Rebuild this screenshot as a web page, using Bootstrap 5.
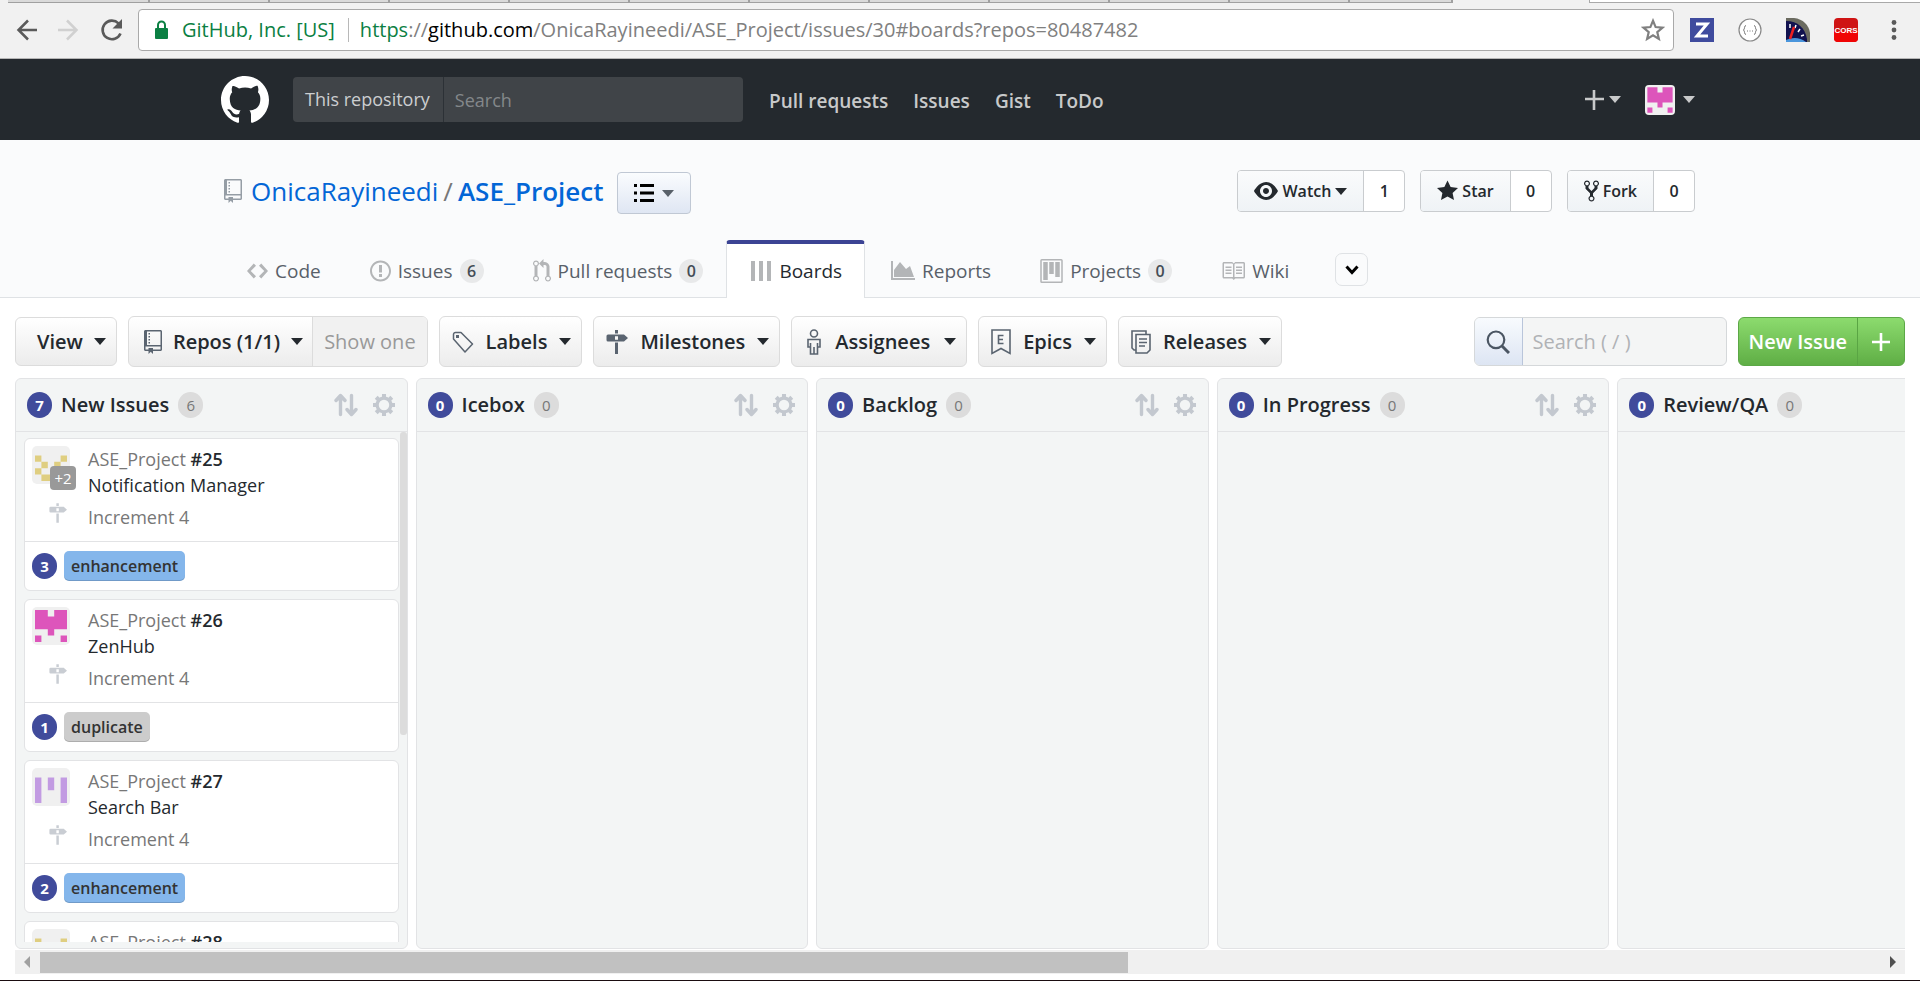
<!DOCTYPE html>
<html lang="en">
<head>
<meta charset="utf-8">
<meta name="viewport" content="width=device-width, initial-scale=1">
<title>ASE_Project boards</title>
<link href="https://cdn.jsdelivr.net/npm/bootstrap@5.3.0/dist/css/bootstrap.min.css" rel="stylesheet">
<style>
:root{--ink:#24292e;--zen:#404b9b;--line:#dfe2e5}
body{font-family:"Open Sans","Noto Sans",sans-serif;color:var(--ink);font-size:18px;line-height:26px;background:#fff}
svg{display:block;flex:none;fill:currentColor}
a{text-decoration:none}
button{font-family:inherit}
.sb{font-weight:600}
.caret{width:0;height:0;border:6px solid transparent;border-top:7px solid currentColor;border-bottom:0;flex:none}
/* browser chrome */
.tabstrip{height:3px;background:#f1f1f1}
.tabstrip i{height:3px;width:120px;background:#dadada;border-bottom:1px solid #a0a0a0;border-left:2px solid #a0a0a0;flex:none}
.tabstrip i:first-child{width:140px;border-left:0}
.tabstrip i.last{width:105px;border-right:2px solid #a0a0a0}
.tabstrip b{border:1px solid #a9a9a9;border-width:0 0 1px 1px;background:#fff;margin-left:136px}
.chrome{background:#f1f1f1;border-bottom:1px solid #b6b6b6;padding:6px 14px 7px 16px;color:#5a5a5a}
.omnibox{height:42px;border:1px solid #a9a9a9;border-radius:4px;background:#fff;font-size:20px;color:#808080;margin-left:14px}
.next{margin-left:20px}
.green{color:#0b8043}
.cut{width:1px;height:24px;background:#b8b8b8;margin:0 11px 0 13px}
/* site header */
.wrap{width:100%;max-width:1474px;margin:0 auto}
.gh,.repohead{padding-right:4px}
.gh{background:var(--ink);height:81px;color:#c8c9ca}
.gh a,.gh button{color:#c8c9ca}
.gh nav{font-size:19px;padding:2px 0 0 26px;gap:25px}
.gh-search{height:45px;width:450px;border-radius:4px;background:#404448;overflow:hidden}
.gh-search label{padding:0 13px 0 12px;border-right:1px solid #2c3136;line-height:45px;color:#ccced0}
.gh-search input{background:none;border:0;color:#ccc;padding:0 11px;min-width:0}
.gh-search input::placeholder{color:#84888b;opacity:1}
.plain{border:0;background:none;padding:0}
/* repository head */
.repohead{background:#fafbfc;border-bottom:1px solid var(--line);height:158px}
.headline{padding-top:30px}
.title{font-size:26px;line-height:32px;padding:0 0 5px 3px}
.title svg{margin-right:9px}
.title span{margin:0 5px}
.title a{color:#0366d6}
.listbtn{width:74px;height:42px;border:1px solid #c0c8d4;border-radius:4px;background:linear-gradient(#fafcfe,#dfe6f3);color:#586069;margin-left:14px}
.social{height:42px;font-size:16px;border:1px solid #c9cccf;border-radius:4px;background:#fff;overflow:hidden;color:var(--ink)}
.social-row{gap:15px;margin-bottom:4px}
.social button{border:0;border-right:1px solid #c9cccf;background:linear-gradient(#fafbfc,#eff3f6);font-weight:600;color:var(--ink);height:40px}
.social a{color:var(--ink);font-weight:600;width:40px}
.tab{height:58px;color:#586069;padding:4px 23px 0 26px;gap:7px;margin-bottom:-1px;font-size:19px}
.tab svg{color:#b3b5b7}
.tab.on{background:#fff;color:var(--ink);border:1px solid var(--line);border-top:4px solid #3c4494;border-bottom:0;border-radius:4px 4px 0 0;padding:0 22px 0 24px;gap:8px}
.num{font-size:16px;line-height:24px;min-width:24px;border-radius:12px;background:#e8e9ea;color:#444d56;font-weight:600;text-align:center}
.more{width:33px;height:33px;border:1px solid var(--line);border-radius:7px;background:#fafbfc;color:#000;margin:13px 0 0 23px}
/* filters */
.filters{padding:18px 15px 11px;height:80px;gap:11px;font-size:20px}
.fbtn{height:51px;border:1px solid #dcdcdc;border-radius:6px;background:linear-gradient(#fff,#ececec);font-weight:600;color:var(--ink);padding:0 10px 0 12px;gap:12px;white-space:nowrap}
.fbtn svg{color:#5a6470}
.fbtn.short{padding-left:21px;gap:11px}
.fbtn.split{padding:0;gap:0}
.fbtn.split .plain{padding:0 9px 0 15px;gap:11px}
.fbtn.loose{padding-left:15px;gap:14px}
.fbtn.short,.find,.new{height:49px}
.showone{font-weight:400;color:#999;background:#f1f1f1;border:0;border-left:1px solid #dcdcdc;border-radius:0 5px 5px 0;padding:0 11px}
.find{width:253px;border:1px solid #d5d8da;border-radius:6px;background:#f4f5f5;overflow:hidden}
.find button{flex:0 0 48px;border:0;border-right:1px solid #b9c5da;background:linear-gradient(#f8fbfe,#dde5f3);color:#4b5663}
.find input{border:0;background:none;min-width:0;padding:0 10px}
.find input::placeholder{color:#b0b2b5;opacity:1}
.new{border:1px solid #5ca846;border-radius:6px;background:linear-gradient(#8cdb6e,#5fae45);overflow:hidden}
.new button{border:0;background:none;color:#fff;font-weight:600;padding:0 10px}
.new button+button{border-left:1px solid #5aa544;width:47px}
/* board */
.board{margin:0 15px;gap:8px;overflow:hidden;min-height:0}
.lane{flex:0 0 20.77%;background:#f3f5f5;border:1px solid #e2e3e5;border-radius:6px;min-height:0;padding-bottom:6px;position:relative}
.lane-head{height:53px;border-bottom:1px solid #e2e3e5;padding:0 12px 0 11px}
.lane-head h2{font-size:20px;line-height:26px;margin:0 9px;font-weight:600}
.lane-head svg{color:#c3c8cf}
.lane-head svg+svg{margin-left:15px}
.pill{height:26px;min-width:25px;line-height:26px;border-radius:13px;background:var(--zen);color:#fff;font-size:15px;font-weight:700;text-align:center}
.pill.grey{background:#dcdcdc;color:#777;font-weight:400}
.cards{overflow:hidden;min-height:0;padding:6px 8px 0;gap:8px}
.issue{border:1px solid #e2e3e5;border-radius:6px;background:#fff;height:153px;flex:none}
.issue-top{height:103px;border-bottom:1px solid #e2e3e5;padding:7px 7px 0;gap:18px}
.issue-tags{height:48px;padding:0 7px;gap:7px}
.due{margin-top:6px}
.face{width:38px;height:38px}
.post{margin:18px 0 0 17px;color:#c9cdd3}
.muted{color:#777}
.plus2{left:18px;top:20px;width:26px;height:24px;border-radius:4px;background:#999;color:#fff;font-size:15px;line-height:24px;text-align:center}
.tag{height:30px;line-height:30px;border-radius:5px;padding:0 7px;background:#84b6eb;color:#333;font-size:16px;font-weight:600;box-shadow:inset 0 -1px 0 rgba(0,0,0,.15)}
.tag.dup{background:#ccc}
.thumb-y{position:absolute;right:0;top:53px;width:7px;height:303px;border-radius:3px;background:#dcdcdc}
.scroll-x{margin:1px 15px 6px;height:24px;background:#f0f0f0;color:#a0a0a0}
.track b{display:block;height:21px;background:#c1c1c1}
.edge{height:1px;background:#1a0c10}
</style>
</head>
<body class="vh-100 overflow-hidden d-flex flex-column">
<svg width="0" height="0" class="position-absolute" aria-hidden="true">
<symbol id="repo" viewBox="0 0 12 16"><path fill-rule="evenodd" d="M4 9H3V8h1v1zm0-3H3v1h1V6zm0-2H3v1h1V4zm0-2H3v1h1V2zm8-1v12c0 .55-.45 1-1 1H6v2l-1.5-1.5L3 16v-2H1c-.55 0-1-.45-1-1V1c0-.55.45-1 1-1h10c.55 0 1 .45 1 1zm-1 10H1v2h2v-1h3v1h5v-2zm0-10H2v9h9V1z"/></symbol>
<symbol id="sign" viewBox="0 0 22 24"><path fill-rule="evenodd" d="M9 0h3v3.500H9zM2 4.500h16l4 3.500L18 11.500H2A1.500 1.500 0 0 1 .5 10V6A1.500 1.500 0 0 1 2 4.500zm7 1.700v3.600h3V6.200zM9 12.500h3V24H9z"/></symbol>
<symbol id="sort" viewBox="0 0 24 24"><path fill="none" stroke="currentColor" stroke-width="3.400" stroke-linecap="round" stroke-linejoin="round" d="M6.500 21.500V3M2 7.500 6.500 2.500 11 7.500M17.500 2.500V21M13 16.500l4.500 5 4.500-5"/></symbol>
<symbol id="gear" viewBox="0 0 24 24"><circle cx="12" cy="12" r="7.500" fill="none" stroke="currentColor" stroke-width="3.600"/><path stroke="currentColor" stroke-width="4.400" d="M12 0v4M12 20v4M0 12h4M20 12h4M3.500 3.500l3 3M17.500 17.500l3 3M20.500 3.500l-3 3M6.500 17.500l-3 3"/></symbol>
<symbol id="pink" viewBox="0 0 38 38"><rect width="38" height="38" rx="5" fill="#f0f0f0"/><path fill="#dd55bb" d="M3 3h12.800v6.400h6.400V3H35v19.200H22.200v6.400h-6.400v-6.400H3zM3 28.600h6.400V35H3zM28.600 28.600H35V35h-6.400z"/></symbol>
<symbol id="gold" viewBox="0 0 38 38"><rect width="38" height="38" rx="5" fill="#f0f0f0"/><path fill="#dfce80" d="M3 9.400h6.400v6.400H3zM28.600 9.400H35v6.400h-6.400zM9.400 15.800h6.400v6.400H9.400zM22.200 15.800h6.400v6.400h-6.400zM3 22.200h6.400v6.400H3zM28.600 22.200H35v6.400h-6.400zM9.400 28.600h19.200V35H9.400z"/></symbol>
<symbol id="violet" viewBox="0 0 38 38"><rect width="38" height="38" rx="5" fill="#f0f0f0"/><path fill="#c29be2" d="M3 9.400h6.400V35H3zM28.600 9.400H35V35h-6.400zM15.800 9.400h6.400v12.800h-6.400z"/></symbol>
</svg>

<div class="tabstrip d-flex ps-2" aria-hidden="true"><i></i><i></i><i></i><i></i><i></i><i></i><i></i><i></i><i></i><i></i><i></i><i class="last"></i><b class="flex-grow-1"></b></div>
<div class="chrome d-flex align-items-center">
  <button class="plain text-reset" aria-label="Back"><svg width="22" height="24" viewBox="0 0 22 24" stroke="currentColor" stroke-width="2.500"><path fill="none" d="M21 12H3M12 2.500 2.500 12 12 21.500"/></svg></button>
  <button class="plain next" aria-label="Forward"><svg width="22" height="24" viewBox="0 0 22 24" stroke="#d0d0d0" stroke-width="2.500"><path fill="none" d="M0 12h18M9 2.500 18.500 12 9 21.500"/></svg></button>
  <button class="plain text-reset next" aria-label="Reload"><svg width="24" height="24" viewBox="0 0 24 24"><path fill="none" stroke="currentColor" stroke-width="2.600" d="M20.500 15.500a9.300 9.300 0 1 1-2-10.200"/><path d="M22 1v9.500h-9.500z"/></svg></button>
  <div class="omnibox flex-grow-1 d-flex align-items-center ps-3 pe-2">
    <svg class="green" width="13" height="20" viewBox="0 0 13 20"><path d="M1 8h11a1 1 0 0 1 1 1v9a1 1 0 0 1-1 1H1a1 1 0 0 1-1-1V9a1 1 0 0 1 1-1z"/><path fill="none" stroke="currentColor" stroke-width="2" d="M3 9V5a3.500 3.500 0 0 1 7 0v4"/></svg>
    <span class="green" style="margin-left:14px">GitHub, Inc. [US]</span><span class="cut"></span>
    <span class="flex-grow-1"><span class="green">https</span>://<span class="text-black">github.com</span>/OnicaRayineedi/ASE_Project/issues/30#boards?repos=80487482</span>
    <svg width="24" height="24" viewBox="0 0 22 22"><path fill="none" stroke="currentColor" stroke-width="2" d="M11 2.500l2.400 5.800 6.300.5-4.800 4.100 1.500 6.200L11 15.800l-5.400 3.300 1.500-6.200-4.800-4.100 6.300-.5z"/></svg>
  </div>
  <svg class="ms-3" width="24" height="24" viewBox="0 0 24 24"><path fill="#3f4b9e" d="M0 0h24v24H0z"/><path fill="none" stroke="#fff" stroke-width="3" d="M6 6h11L7 18h11"/></svg>
  <svg class="ms-4" width="24" height="24" viewBox="0 0 24 24"><circle cx="12" cy="12" r="11" fill="#fff" stroke="#888" stroke-width="1.200"/><path fill="none" stroke="#777" d="M8 7.500c-2 0-1 3.500-2.500 4.500 1.500 1 .5 4.500 2.500 4.500M16 7.500c2 0 1 3.500 2.500 4.500-1.500 1-.5 4.500-2.500 4.500M9 13h1M11.500 13h1M14 13h1"/></svg>
  <svg class="ms-4" width="24" height="24" viewBox="0 0 24 24"><path fill="#6b6b60" d="M0 0h8c9 1 15 7 16 15v9H0z"/><path fill="#12124f" d="M0 3c12 0 19 7 21 18v3H0z"/><path fill="#4a96dc" d="M0 22c6-3 14-3 20 2H0z"/><path stroke="#fff" stroke-width="1.500" d="M4 6v4M10 7l-1 3M14 11l-2 3M18 17l-3 1"/><path stroke="#f02020" stroke-width="2.500" d="M8 9 4 21"/></svg>
  <svg class="ms-4" width="24" height="24" viewBox="0 0 24 24"><rect width="24" height="24" rx="4" fill="#cf1414"/><path fill="#f00505" d="M0 13h24v7a4 4 0 0 1-4 4H4a4 4 0 0 1-4-4z"/><text x="12" y="15" font-size="8" font-weight="700" text-anchor="middle" fill="#fff" font-family="Liberation Sans Narrow, Liberation Sans, sans-serif">CORS</text></svg>
  <button class="plain text-reset ms-4 px-2" aria-label="Menu"><svg width="8" height="24" viewBox="0 0 8 24"><circle cx="4" cy="4.500" r="2.400"/><circle cx="4" cy="12" r="2.400"/><circle cx="4" cy="19.500" r="2.400"/></svg></button>
</div>

<header class="gh flex-shrink-0"><div class="wrap h-100 d-flex align-items-center">
  <a href="#" class="text-white" aria-label="GitHub"><svg width="48" height="48" viewBox="0 0 16 16"><path fill-rule="evenodd" d="M8 0C3.580 0 0 3.580 0 8c0 3.540 2.290 6.530 5.470 7.590.4.070.55-.17.55-.38 0-.19-.01-.82-.01-1.490-2.010.37-2.530-.49-2.690-.94-.09-.23-.48-.94-.82-1.130-.28-.15-.68-.52-.01-.53.63-.01 1.080.58 1.230.82.72 1.210 1.870.87 2.330.66.07-.52.28-.87.51-1.070-1.780-.2-3.640-.89-3.640-3.950 0-.87.31-1.590.82-2.150-.08-.2-.36-1.020.08-2.120 0 0 .67-.21 2.200.82.64-.18 1.320-.27 2-.27s1.360.09 2 .27c1.530-1.040 2.200-.82 2.200-.82.44 1.100.16 1.920.08 2.120.51.56.82 1.270.82 2.150 0 3.070-1.870 3.750-3.650 3.950.29.25.54.73.54 1.480 0 1.070-.01 1.930-.01 2.200 0 .21.15.46.55.38A8.013 8.013 0 0 0 16 8c0-4.420-3.580-8-8-8z"/></svg></a>
  <div class="gh-search d-flex ms-4"><label for="q">This repository</label><input id="q" class="flex-grow-1" type="text" placeholder="Search"></div>
  <nav class="d-flex sb"><a href="#">Pull requests</a><a href="#">Issues</a><a href="#">Gist</a><a href="#">ToDo</a></nav>
  <div class="ms-auto d-flex align-items-center">
    <button class="plain d-flex align-items-center gap-1" aria-label="Create new"><svg width="20" height="20" viewBox="0 0 20 20"><path stroke="currentColor" stroke-width="2.600" d="M9 0v20M0 9h19"/></svg><span class="caret"></span></button>
    <button class="plain d-flex align-items-center gap-2 ms-4" aria-label="Account"><svg width="30" height="30" viewBox="0 0 30 30"><use href="#pink"/></svg><span class="caret"></span></button>
  </div>
</div></header>

<section class="repohead flex-shrink-0"><div class="wrap h-100 d-flex flex-column">
  <div class="headline d-flex align-items-center">
    <h1 class="title d-flex align-items-center m-0 fw-normal"><svg width="18" height="24" color="#959da5"><use href="#repo"/></svg><a href="#">OnicaRayineedi</a><span class="muted">/</span><a href="#" class="sb">ASE_Project</a></h1>
    <button class="listbtn d-flex align-items-center justify-content-center gap-2" aria-label="Repository list"><svg width="20" height="18" viewBox="0 0 20 18" color="#000"><path stroke="currentColor" stroke-width="3" d="M0 1.500h3M6 1.500h14M0 9h3M6 9h14M0 16.500h3M6 16.500h14"/></svg><span class="caret"></span></button>
    <div class="social-row ms-auto d-flex">
      <div class="social d-flex align-items-center"><button class="d-flex align-items-center px-3 gap-1"><svg width="24" height="24" viewBox="0 0 16 16"><path fill-rule="evenodd" d="M8.060 2C3 2 0 8 0 8s3 6 8.060 6C13 14 16 8 16 8s-3-6-7.940-6zM8 12c-2.200 0-4-1.780-4-4 0-2.200 1.800-4 4-4 2.220 0 4 1.800 4 4 0 2.220-1.780 4-4 4zm2-4c0 1.110-.89 2-2 2-1.110 0-2-.89-2-2 0-1.110.89-2 2-2 1.110 0 2 .89 2 2z"/></svg>Watch<span class="caret"></span></button><a href="#" class="text-center">1</a></div>
      <div class="social d-flex align-items-center"><button class="d-flex align-items-center px-3 gap-1"><svg width="21" height="24" viewBox="0 0 14 16"><path d="M14 6l-4.900-.64L7 1 4.900 5.360 0 6l3.600 3.260L2.670 14 7 11.670 11.330 14l-.93-4.740L14 6z"/></svg>Star</button><a href="#" class="text-center">0</a></div>
      <div class="social d-flex align-items-center"><button class="d-flex align-items-center px-3 gap-1"><svg width="15" height="24" viewBox="0 0 10 16"><path fill-rule="evenodd" d="M8 1a1.993 1.993 0 0 0-1 3.720V6L5 8 3 6V4.720A1.993 1.993 0 0 0 2 1a1.993 1.993 0 0 0-1 3.720V6.500l3 3v1.780A1.993 1.993 0 0 0 5 15a1.993 1.993 0 0 0 1-3.720V9.500l3-3V4.720A1.993 1.993 0 0 0 8 1zM2 4.200C1.340 4.200.8 3.650.8 3c0-.65.55-1.200 1.200-1.200.65 0 1.200.55 1.200 1.200 0 .65-.55 1.200-1.200 1.200zm3 10c-.66 0-1.200-.55-1.200-1.200 0-.65.55-1.200 1.200-1.200.65 0 1.200.55 1.200 1.200 0 .65-.55 1.200-1.200 1.200zm3-10c-.66 0-1.200-.55-1.200-1.200 0-.65.55-1.200 1.200-1.200.65 0 1.200.55 1.200 1.200 0 .65-.55 1.200-1.200 1.200z"/></svg>Fork</button><a href="#" class="text-center">0</a></div>
    </div>
  </div>
  <nav class="d-flex mt-auto">
    <a class="tab d-flex align-items-center" href="#"><svg width="21" height="24" viewBox="0 0 14 16"><path d="M9.500 3L8 4.500 11.500 8 8 11.500 9.500 13 14 8 9.500 3zm-5 0L0 8l4.500 5L6 11.500 2.500 8 6 4.500 4.500 3z"/></svg>Code</a>
    <a class="tab d-flex align-items-center" href="#"><svg width="21" height="24" viewBox="0 0 14 16"><path fill-rule="evenodd" d="M7 2.300c3.140 0 5.700 2.560 5.700 5.700s-2.560 5.700-5.700 5.700A5.710 5.710 0 0 1 1.300 8c0-3.140 2.560-5.700 5.700-5.700zM7 1C3.140 1 0 4.140 0 8s3.140 7 7 7 7-3.140 7-7-3.140-7-7-7zm1 3H6v5h2V4zm0 6H6v2h2v-2z"/></svg>Issues<span class="num">6</span></a>
    <a class="tab d-flex align-items-center" href="#"><svg width="18" height="24" viewBox="0 0 12 16"><path fill-rule="evenodd" d="M11 11.280V5c-.03-.78-.34-1.470-.94-2.060C9.460 2.350 8.780 2.030 8 2H7V0L4 3l3 3V4h1c.27.02.48.11.69.31.21.2.3.42.31.69v6.280A1.993 1.993 0 0 0 10 15a1.993 1.993 0 0 0 1-3.720zm-1 2.920c-.66 0-1.200-.55-1.200-1.200 0-.65.55-1.200 1.200-1.200.65 0 1.200.55 1.200 1.200 0 .65-.55 1.200-1.200 1.200zM4 3c0-1.110-.89-2-2-2a1.993 1.993 0 0 0-1 3.720v6.560A1.993 1.993 0 0 0 2 15a1.993 1.993 0 0 0 1-3.720V4.720c.59-.34 1-.98 1-1.720zm-.8 10c0 .66-.55 1.200-1.200 1.200-.65 0-1.200-.55-1.200-1.200 0-.65.55-1.200 1.200-1.200.65 0 1.200.55 1.200 1.200zM2 4.200C1.340 4.200.8 3.650.8 3c0-.65.55-1.200 1.200-1.200.65 0 1.200.55 1.200 1.200 0 .65-.55 1.200-1.200 1.200z"/></svg>Pull requests<span class="num">0</span></a>
    <a class="tab on d-flex align-items-center" href="#"><svg width="20" height="20" viewBox="0 0 20 20"><path d="M0 0h4v20H0zM8 0h4v20H8zM16 0h4v20h-4z"/></svg>Boards</a>
    <a class="tab d-flex align-items-center" href="#"><svg width="24" height="20" viewBox="0 0 24 20"><path d="M0 0h2v17h22v2H0zM3 16V9l6-8 6 7 4-3 4 11z"/></svg>Reports</a>
    <a class="tab d-flex align-items-center" href="#"><svg width="23" height="24" viewBox="0 0 15 16"><path fill-rule="evenodd" d="M10 12h3V2h-3v10zm-4-2h3V2H6v8zm-4 4h3V2H2v12zm-1 1h13V1H1v14zM14 0H1a1 1 0 0 0-1 1v14a1 1 0 0 0 1 1h13a1 1 0 0 0 1-1V1a1 1 0 0 0-1-1z"/></svg>Projects<span class="num">0</span></a>
    <a class="tab d-flex align-items-center" href="#"><svg width="24" height="24" viewBox="0 0 16 16"><path fill-rule="evenodd" d="M3 5h4v1H3V5zm0 3h4V7H3v1zm0 2h4V9H3v1zm11-5h-4v1h4V5zm0 2h-4v1h4V7zm0 2h-4v1h4V9zm2-6v9c0 .55-.45 1-1 1H9.500l-1 1-1-1H2c-.55 0-1-.45-1-1V3c0-.55.45-1 1-1h5.500l1 1 1-1H15c.55 0 1 .45 1 1zm-8 .5L7.500 3H2v9h6V3.500zm7-.5H9.500l-.5.5V12h6V3z"/></svg>Wiki</a>
    <button class="more d-flex align-items-center justify-content-center align-self-start" aria-label="More"><svg width="14" height="10" viewBox="0 0 14 10"><path fill="none" stroke="currentColor" stroke-width="3" d="M1.500 1.500 7 7.500l5.500-6"/></svg></button>
  </nav>
</div></section>

<div class="filters d-flex flex-shrink-0 align-items-center">
  <button class="fbtn short d-flex align-items-center">View<span class="caret"></span></button>
  <div class="fbtn split d-flex align-items-stretch"><button class="plain sb d-flex align-items-center text-reset"><svg width="18" height="24"><use href="#repo"/></svg>Repos (1/1)<span class="caret"></span></button><button class="showone" disabled>Show one</button></div>
  <button class="fbtn d-flex align-items-center"><svg width="22" height="22" viewBox="0 0 22 22"><path fill="none" stroke="currentColor" stroke-width="1.500" stroke-linejoin="round" d="M1.500 8V3.500a2 2 0 0 1 2-2H9L20.500 13l-7.500 8z"/><path d="M4 4h3v3H4z"/></svg>Labels<span class="caret"></span></button>
  <button class="fbtn d-flex align-items-center"><svg width="22" height="24"><use href="#sign"/></svg>Milestones<span class="caret"></span></button>
  <button class="fbtn loose d-flex align-items-center"><svg width="14" height="26" viewBox="0 0 14 26"><g fill="none" stroke="currentColor" stroke-width="1.600"><circle cx="7" cy="4.500" r="3.500"/><path d="M3.500 18H1v-7.500h12V18h-2.500M3.500 14v11h7V14M7 18v7"/></g></svg>Assignees<span class="caret"></span></button>
  <button class="fbtn d-flex align-items-center"><svg width="20" height="26" viewBox="0 0 20 26"><path fill="none" stroke="currentColor" stroke-width="1.600" d="M1 1h18v23.500l-9-5-9 5zM12.500 6.500h-5v8h5M7.500 10.500H12"/></svg>Epics<span class="caret"></span></button>
  <button class="fbtn d-flex align-items-center"><svg width="20" height="24" viewBox="0 0 20 24"><path fill="none" stroke="currentColor" stroke-width="1.600" d="M5 4.500h14V20l-3 3H5zM5 20H3l-2-2V1h14v3.500M8 9h8M8 12.500h8M8 16h6M5 4.500h6"/></svg>Releases<span class="caret"></span></button>
  <div class="find d-flex ms-auto"><button class="d-flex align-items-center justify-content-center" aria-label="Search"><svg width="24" height="24" viewBox="0 0 24 24"><path fill="none" stroke="currentColor" stroke-width="2.200" d="M10 1.500a8.300 8.300 0 1 0 0 16.600 8.300 8.300 0 1 0 0-16.600z"/><path stroke="currentColor" stroke-width="3" d="m15.500 15.500 7.500 7.500"/></svg></button><input class="flex-grow-1" type="text" aria-label="Search issues" placeholder="Search ( / )"></div>
  <div class="new d-flex"><button>New Issue</button><button class="d-flex align-items-center justify-content-center" aria-label="Add"><svg width="18" height="18" viewBox="0 0 18 18"><path stroke="currentColor" stroke-width="2.600" d="M9 0v18M0 9h18"/></svg></button></div>
</div>

<main class="board d-flex flex-grow-1">
  <section class="lane d-flex flex-column">
    <div class="lane-head d-flex align-items-center flex-shrink-0"><span class="pill">7</span><h2>New Issues</h2><span class="pill grey">6</span><svg class="ms-auto" width="24" height="24"><use href="#sort"/></svg><svg width="22" height="22"><use href="#gear"/></svg></div>
    <div class="cards d-flex flex-column">
      <article class="issue"><div class="issue-top d-flex"><div class="position-relative"><svg class="face"><use href="#gold"/></svg><span class="plus2 position-absolute">+2</span><svg class="post" width="18" height="22"><use href="#sign"/></svg></div><div><div><span class="muted">ASE_Project</span> <b class="sb">#25</b></div><div>Notification Manager</div><div class="muted due">Increment 4</div></div></div><div class="issue-tags d-flex align-items-center"><span class="pill">3</span><span class="tag">enhancement</span></div></article>
      <article class="issue"><div class="issue-top d-flex"><div><svg class="face"><use href="#pink"/></svg><svg class="post" width="18" height="22"><use href="#sign"/></svg></div><div><div><span class="muted">ASE_Project</span> <b class="sb">#26</b></div><div>ZenHub</div><div class="muted due">Increment 4</div></div></div><div class="issue-tags d-flex align-items-center"><span class="pill">1</span><span class="tag dup">duplicate</span></div></article>
      <article class="issue"><div class="issue-top d-flex"><div><svg class="face"><use href="#violet"/></svg><svg class="post" width="18" height="22"><use href="#sign"/></svg></div><div><div><span class="muted">ASE_Project</span> <b class="sb">#27</b></div><div>Search Bar</div><div class="muted due">Increment 4</div></div></div><div class="issue-tags d-flex align-items-center"><span class="pill">2</span><span class="tag">enhancement</span></div></article>
      <article class="issue"><div class="issue-top d-flex"><div><svg class="face"><use href="#gold"/></svg></div><div><span class="muted">ASE_Project</span> <b class="sb">#28</b></div></div></article>
    </div>
    <div class="thumb-y"></div>
  </section>
  <section class="lane"><div class="lane-head d-flex align-items-center"><span class="pill">0</span><h2>Icebox</h2><span class="pill grey">0</span><svg class="ms-auto" width="24" height="24"><use href="#sort"/></svg><svg width="22" height="22"><use href="#gear"/></svg></div></section>
  <section class="lane"><div class="lane-head d-flex align-items-center"><span class="pill">0</span><h2>Backlog</h2><span class="pill grey">0</span><svg class="ms-auto" width="24" height="24"><use href="#sort"/></svg><svg width="22" height="22"><use href="#gear"/></svg></div></section>
  <section class="lane"><div class="lane-head d-flex align-items-center"><span class="pill">0</span><h2>In Progress</h2><span class="pill grey">0</span><svg class="ms-auto" width="24" height="24"><use href="#sort"/></svg><svg width="22" height="22"><use href="#gear"/></svg></div></section>
  <section class="lane"><div class="lane-head d-flex align-items-center"><span class="pill">0</span><h2>Review/QA</h2><span class="pill grey">0</span></div></section>
</main>
<div class="scroll-x d-flex align-items-center flex-shrink-0"><svg width="25" height="12" viewBox="0 0 25 12"><path d="M15 0v12L9 6z"/></svg><div class="track flex-grow-1"><b style="width:59%"></b></div><svg width="21" height="12" viewBox="0 0 21 12" color="#505050"><path d="M6 0v12l6-6z"/></svg></div>
<div class="edge flex-shrink-0"></div>
<script src="https://cdn.jsdelivr.net/npm/bootstrap@5.3.0/dist/js/bootstrap.bundle.min.js"></script>
</body>
</html>
